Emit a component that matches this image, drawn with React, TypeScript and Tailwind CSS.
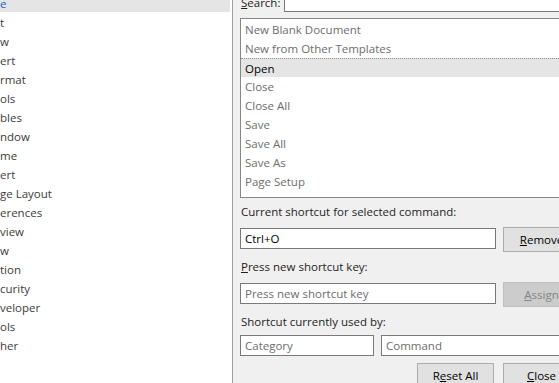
const categories = [
  "e",
  "t",
  "w",
  "ert",
  "rmat",
  "ols",
  "bles",
  "ndow",
  "me",
  "ert",
  "ge Layout",
  "erences",
  "view",
  "w",
  "tion",
  "curity",
  "veloper",
  "ols",
  "her",
];

const commands = [
  "New Blank Document",
  "New from Other Templates",
  "Open",
  "Close",
  "Close All",
  "Save",
  "Save All",
  "Save As",
  "Page Setup",
];

export default function App() {
  return (
    <div className="w-[559px] h-[383px] overflow-hidden flex font-['Open_Sans',sans-serif] text-[11.5px] text-[#1e1e1e]">
      {/* categories list */}
      <div className="w-[233px] shrink-0 bg-white border-r border-[#a0a0a0] overflow-hidden">
        <ul className="-mt-[7px]">
          {categories.map((c, i) => (
            <li
              key={i}
              className={
                i === 0
                  ? "h-[19px] leading-[21px] mr-[2px] bg-[#e5e5e5] text-[#1a62c4]"
                  : "h-[19px] leading-[21px] text-[#3c3c3c]"
              }
            >
              {c}
            </li>
          ))}
        </ul>
      </div>

      {/* commands + shortcut area */}
      <div className="flex-1 bg-[#f0f0f0] pl-[7px] overflow-hidden">
        <div className="w-[340px]">
          <div className="flex items-end -mt-[10px] h-[22px]">
            <span className="w-[44px] pl-[1px] leading-[19px]">
              <span className="underline">S</span>earch:
            </span>
            <div className="flex-1 h-[22px] bg-white border border-[#7a7a7a]" />
          </div>

          <ul className="mt-[6px] h-[180px] bg-white border border-[#828790] pt-[1px]">
            {commands.map((c) =>
              c === "Open" ? (
                <li
                  key={c}
                  className="h-[19px] leading-[19px] pl-[4px] bg-[#e5e5e5] text-black border-t border-dotted border-[#8c8c8c]"
                >
                  {c}
                </li>
              ) : (
                <li key={c} className="h-[19px] leading-[20px] pl-[4px] text-[#6d6d6d]">
                  {c}
                </li>
              )
            )}
          </ul>

          <div className="mt-[4px] h-[19px] leading-[19px] pl-[1px]">
            Current shortcut for selected command:
          </div>
          <div className="mt-[6px] flex gap-[7px]">
            <div className="mt-[1px] w-[256px] h-[21px] bg-white border border-[#7a7a7a] pl-[4px] leading-[19px] text-black">
              Ctrl+O
            </div>
            <button className="w-[77px] h-[25px] bg-[#e1e1e1] border border-[#adadad] text-black">
              <span className="underline">R</span>emove
            </button>
          </div>

          <div className="mt-[5px] h-[19px] leading-[19px] pl-[1px]">
            <span className="underline">P</span>ress new shortcut key:
          </div>
          <div className="mt-[6px] flex gap-[7px]">
            <div className="mt-[1px] w-[256px] h-[21px] bg-white border border-[#7a7a7a] pl-[4px] leading-[19px] text-[#6d6d6d]">
              Press new shortcut key
            </div>
            <button className="w-[77px] h-[25px] bg-[#cccccc] border border-[#bfbfbf] text-[#838383]">
              <span className="underline">A</span>ssign
            </button>
          </div>

          <div className="mt-[5px] h-[19px] leading-[19px] pl-[1px]">
            Shortcut currently used by:
          </div>
          <div className="mt-[4px] flex gap-[7px]">
            <div className="w-[134px] h-[21px] bg-white border border-[#7a7a7a] pl-[4px] leading-[19px] text-[#6d6d6d]">
              Category
            </div>
            <div className="flex-1 h-[21px] bg-white border border-[#7a7a7a] pl-[4px] leading-[19px] text-[#6d6d6d]">
              Command
            </div>
          </div>

          <div className="mt-[7px] flex justify-end gap-[9px]">
            <button className="w-[77px] h-[25px] bg-[#e1e1e1] border border-[#adadad] text-black">
              R<span className="underline">e</span>set All
            </button>
            <button className="w-[77px] h-[25px] bg-[#e1e1e1] border border-[#adadad] text-black">
              <span className="underline">C</span>lose
            </button>
          </div>
        </div>
      </div>
    </div>
  );
}
